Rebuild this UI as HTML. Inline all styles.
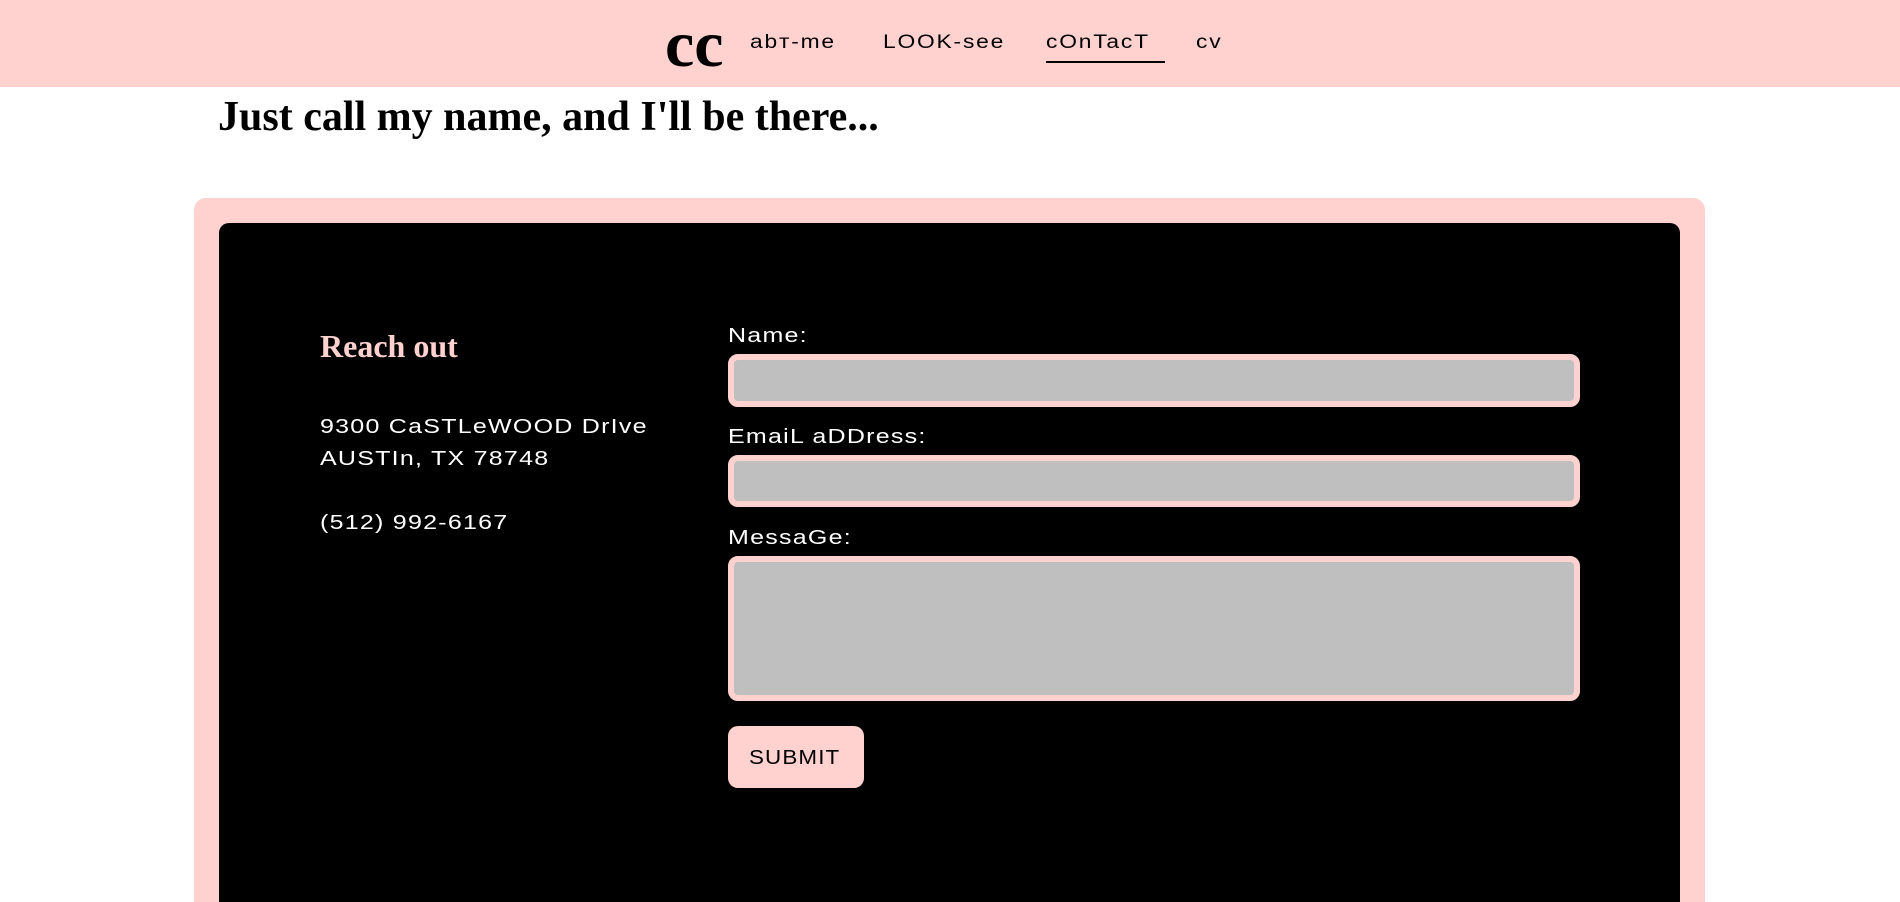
<!DOCTYPE html>
<html><head><style>
*{box-sizing:border-box;margin:0;padding:0}
html,body{width:1900px;height:902px;overflow:hidden}
body{background:#fff;position:relative;font-family:"Liberation Sans",sans-serif}
.hdr{position:absolute;left:0;top:0;width:1900px;height:87px;background:#ffd1cf}
.logo{position:absolute;left:665px;top:12px;font:bold 66px/1 "Liberation Serif",serif;color:#000;letter-spacing:0}
.nav{position:absolute;top:32px;font-size:19px;color:#000;letter-spacing:1.5px;transform:scaleX(1.2);transform-origin:left}
h1{position:absolute;left:218px;top:96px;font:bold 42px/1 "Liberation Serif",serif;color:#000}
.pink{position:absolute;left:194px;top:198px;width:1511px;height:704px;background:#ffd1cf;border-radius:12px 12px 0 0}
.black{position:absolute;left:219px;top:223px;width:1461px;height:679px;background:#000;border-radius:10px 10px 0 0}
.w{position:absolute;color:#fff;font-size:20px;letter-spacing:1px;transform:scaleX(1.25);transform-origin:left}
.ro{position:absolute;left:320px;top:330px;font:bold 32px/1 "Liberation Serif",serif;color:#ffd1cf}
.inp{position:absolute;left:728px;width:852px;background:#bfbfbf;border:6px solid #ffd1cf;border-radius:10px}
.btn{position:absolute;left:728px;top:726px;width:136px;height:62px;background:#ffd1cf;border-radius:10px}
</style></head><body>
<div class="hdr">
<div class="logo">cc</div>
<div class="nav" style="left:750px">abт-me</div>
<div class="nav" style="left:883px">LOOK-see</div>
<div class="nav" style="left:1046px">cOnTacT</div>
<div style="position:absolute;left:1046px;top:61px;width:119px;height:2px;background:#000"></div>
<div class="nav" style="left:1196px">cv</div>
</div>
<h1>Just call my name, and I'll be there...</h1>
<div class="pink"></div>
<div class="black"></div>
<div class="ro">Reach out</div>
<div class="w" style="left:320px;top:416px">9300 CaSTLeWOOD DrIve</div>
<div class="w" style="left:320px;top:448px">AUSTIn, TX 78748</div>
<div class="w" style="left:320px;top:512px">(512) 992-6167</div>
<div class="w" style="left:728px;top:325px">Name:</div>
<div class="inp" style="top:354px;height:53px"></div>
<div class="w" style="left:728px;top:426px">EmaiL aDDress:</div>
<div class="inp" style="top:455px;height:52px"></div>
<div class="w" style="left:728px;top:527px">MessaGe:</div>
<div class="inp" style="top:556px;height:145px"></div>
<div class="btn"></div>
<div class="w" style="left:749px;top:747px;color:#000;transform:scaleX(1.12)">SUBMIT</div>
</body></html>
